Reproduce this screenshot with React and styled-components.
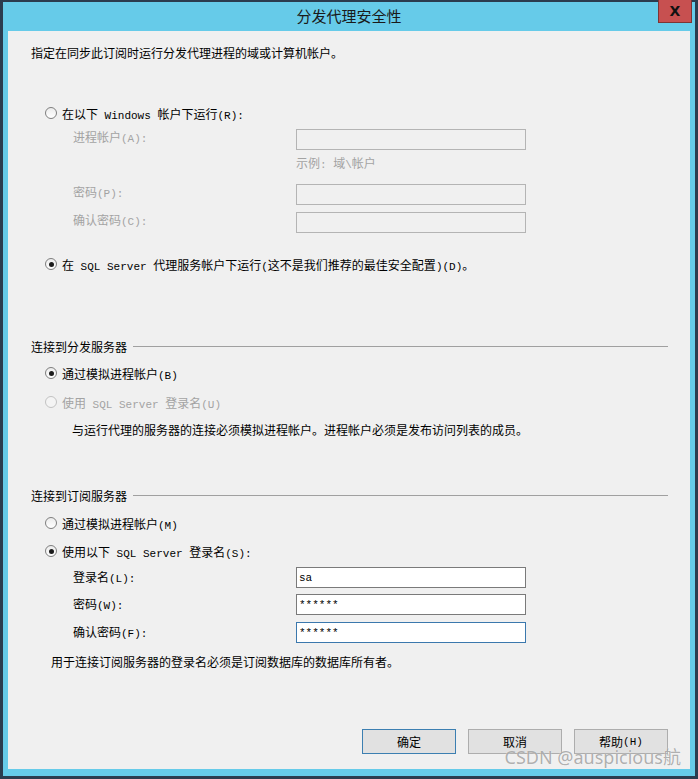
import React from 'react';
import styled, { createGlobalStyle } from 'styled-components';

const GlobalStyle = createGlobalStyle`
  body {
    margin: 0;
    background: #ffffff;
    font-family: "Noto Sans CJK SC", "Noto Sans", sans-serif;
  }
`;

const Window = styled.div`
  position: relative;
  width: 698px;
  height: 779px;
  box-sizing: border-box;
  display: flex;
  flex-direction: column;
  padding: 0 5px 7px;
  background: #66cbe9;
  border: 3px solid #2b3c4f;
  border-top-width: 2px;
`;

const TitleBar = styled.div`
  position: relative;
  height: 29px;
  display: flex;
  align-items: center;
  justify-content: center;
  font-size: 15px;
  color: #1a1a1a;
  padding-bottom: 2px;
  box-sizing: border-box;
`;

const CloseButton = styled.div`
  position: absolute;
  top: -2px;
  right: -2px;
  width: 34px;
  height: 23px;
  box-sizing: border-box;
  background: #c75050;
  border: 1px solid #7d3434;
  border-top: none;
  display: flex;
  align-items: center;
  justify-content: center;
  font-family: "DejaVu Sans", sans-serif;
  font-weight: bold;
  font-size: 14px;
  color: #111;
`;

const Content = styled.div`
  flex: 1;
  display: flex;
  flex-direction: column;
  background: #f0f0f0;
  padding: 14px 22px 15px 23px;
  font-size: 12px;
  color: #000;
`;

const Line = styled.div`
  margin-top: ${(p) => p.$mt || 0}px;
  margin-left: ${(p) => p.$indent || 0}px;
  height: 16px;
  line-height: 16px;
  white-space: nowrap;
  color: ${(p) => (p.$disabled ? '#a3a3a3' : '#000')};
`;

const Half = styled.span`
  font-family: "Liberation Mono", monospace;
  font-size: 11px;
`;

const RadioRow = styled.div`
  display: flex;
  align-items: center;
  gap: 5px;
  height: 16px;
  margin-top: ${(p) => p.$mt}px;
  margin-left: 14px;
  white-space: nowrap;
  color: ${(p) => (p.$disabled ? '#a3a3a3' : '#000')};
`;

const Radio = styled.span`
  position: relative;
  width: 12px;
  height: 12px;
  box-sizing: border-box;
  border-radius: 50%;
  border: 1px solid ${(p) => (p.$disabled ? '#c2c2c2' : '#7e7e7e')};
  background: ${(p) => (p.$disabled ? '#f4f4f4' : 'linear-gradient(#ececec, #ffffff)')};

  &::after {
    content: '';
    display: ${(p) => (p.$checked ? 'block' : 'none')};
    position: absolute;
    left: 2.5px;
    top: 2.5px;
    width: 5px;
    height: 5px;
    border-radius: 50%;
    background: #1b1b1b;
  }
`;

const FieldRow = styled.div`
  display: flex;
  align-items: ${(p) => (p.$top ? 'flex-start' : 'center')};
  margin-top: ${(p) => p.$mt}px;
  margin-left: 42px;
`;

const FieldLabel = styled.div`
  width: 223px;
  line-height: 15px;
  white-space: nowrap;
  color: ${(p) => (p.$disabled ? '#a3a3a3' : '#000')};
`;

const TextBox = styled.div`
  width: 230px;
  height: 21px;
  box-sizing: border-box;
  display: flex;
  align-items: center;
  padding-left: 2px;
  background: ${(p) => (p.$disabled ? '#f0f0f0' : '#ffffff')};
  border: 1px solid
    ${(p) => (p.$disabled ? '#b4b4b4' : p.$focused ? '#3b78ad' : '#7a7a7a')};
  font-family: "Liberation Mono", monospace;
  font-size: 11px;
  color: #000;
`;

const SectionHeader = styled.div`
  display: flex;
  align-items: center;
  gap: 6px;
  height: 16px;
  margin-top: ${(p) => p.$mt}px;
  white-space: nowrap;

  &::after {
    content: '';
    flex: 1;
    height: 1px;
    background: #a0a0a0;
  }
`;

const ButtonBar = styled.div`
  margin-top: auto;
  display: flex;
  justify-content: flex-end;
  gap: 12px;
`;

const Button = styled.div`
  width: 94px;
  height: 25px;
  box-sizing: border-box;
  display: flex;
  align-items: center;
  justify-content: center;
  background: #e1e1e1;
  border: 1px solid ${(p) => (p.$default ? '#3c7fb1' : '#adadad')};
  color: #000;
  white-space: nowrap;
`;

/* overlay text stamped over the bottom-right corner of the screenshot */
const Watermark = styled.div`
  position: absolute;
  right: 14px;
  bottom: 9px;
  font-family: "Noto Sans", "Noto Sans CJK SC", sans-serif;
  font-size: 18px;
  line-height: 20px;
  color: rgba(125, 125, 125, 0.62);
  text-shadow: 0 0 1px rgba(255, 255, 255, 0.9);
  pointer-events: none;
`;

// split latin runs so they render half-width like the dialog font
const T = ({ children }) =>
  String(children)
    .split(/([\x20-\x7e]+)/)
    .filter(Boolean)
    .map((part, i) =>
      /^[\x20-\x7e]+$/.test(part) ? <Half key={i}>{part}</Half> : <span key={i}>{part}</span>
    );

const RadioOption = ({ mt, checked, disabled, children }) => (
  <RadioRow $mt={mt} $disabled={disabled}>
    <Radio $checked={checked} $disabled={disabled} />
    <span>
      <T>{children}</T>
    </span>
  </RadioRow>
);

const Field = ({ mt, label, value, disabled, focused, top }) => (
  <FieldRow $mt={mt} $top={top}>
    <FieldLabel $disabled={disabled}>
      <T>{label}</T>
    </FieldLabel>
    <TextBox $disabled={disabled} $focused={focused}>
      {value}
    </TextBox>
  </FieldRow>
);

export default function App() {
  return (
    <>
      <GlobalStyle />
      <Window>
        <TitleBar>
          分发代理安全性
          <CloseButton>X</CloseButton>
        </TitleBar>
        <Content>
          <Line>指定在同步此订阅时运行分发代理进程的域或计算机帐户。</Line>

          <RadioOption mt={44}>在以下 Windows 帐户下运行(R):</RadioOption>
          <Field mt={8} label="进程帐户(A):" disabled top />
          <Line $mt={5} $indent={265} $disabled>
            <T>示例: 域\帐户</T>
          </Line>
          <Field mt={13} label="密码(P):" disabled top />
          <Field mt={7} label="确认密码(C):" disabled top />
          <RadioOption mt={23} checked>
            在 SQL Server 代理服务帐户下运行(这不是我们推荐的最佳安全配置)(D)。
          </RadioOption>

          <SectionHeader $mt={66}>连接到分发服务器</SectionHeader>
          <RadioOption mt={11} checked>
            通过模拟进程帐户(B)
          </RadioOption>
          <RadioOption mt={13} disabled>
            使用 SQL Server 登录名(U)
          </RadioOption>
          <Line $mt={12} $indent={41}>
            与运行代理的服务器的连接必须模拟进程帐户。进程帐户必须是发布访问列表的成员。
          </Line>

          <SectionHeader $mt={49}>连接到订阅服务器</SectionHeader>
          <RadioOption mt={12}>通过模拟进程帐户(M)</RadioOption>
          <RadioOption mt={12} checked>
            使用以下 SQL Server 登录名(S):
          </RadioOption>
          <Field mt={8} label="登录名(L):" value="sa" />
          <Field mt={6} label="密码(W):" value="******" />
          <Field mt={7} label="确认密码(F):" value="******" focused />
          <Line $mt={11} $indent={20}>
            用于连接订阅服务器的登录名必须是订阅数据库的数据库所有者。
          </Line>

          <ButtonBar>
            <Button $default>确定</Button>
            <Button>取消</Button>
            <Button>
              <T>帮助(H)</T>
            </Button>
          </ButtonBar>
        </Content>
        <Watermark>CSDN @auspicious航</Watermark>
      </Window>
    </>
  );
}
